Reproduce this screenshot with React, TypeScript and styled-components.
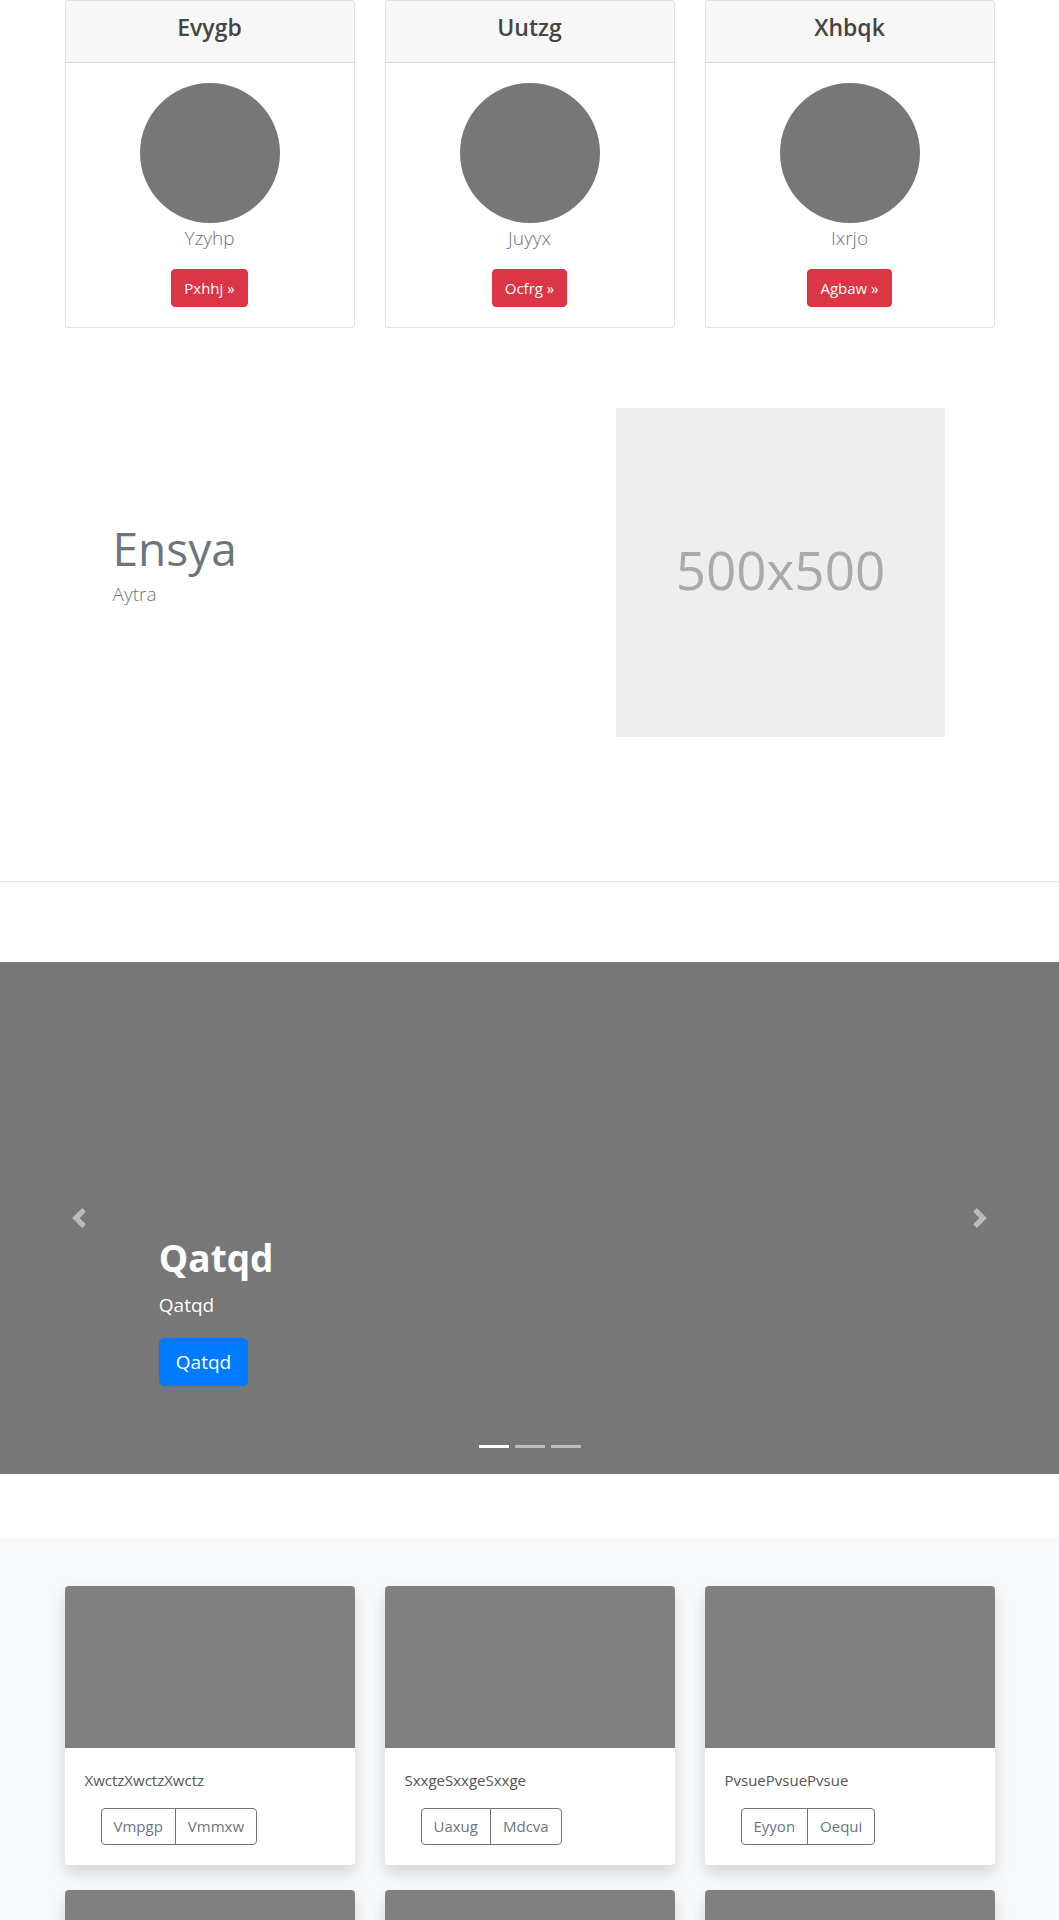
import styled, { createGlobalStyle } from "styled-components"

const GlobalStyle = createGlobalStyle`
  * { box-sizing: border-box; }
  body {
    margin: 0;
    background: #fff;
    color: #212529;
    font-family: "Open Sans", "Noto Sans", sans-serif;
  }
`

const team = [
  { title: "Evygb", name: "Yzyhp", action: "Pxhhj" },
  { title: "Uutzg", name: "Juyyx", action: "Ocfrg" },
  { title: "Xhbqk", name: "Ixrjo", action: "Agbaw" },
]

const albums = [
  { text: "XwctzXwctzXwctz", buttons: ["Vmpgp", "Vmmxw"] },
  { text: "SxxgeSxxgeSxxge", buttons: ["Uaxug", "Mdcva"] },
  { text: "PvsuePvsuePvsue", buttons: ["Eyyon", "Oequi"] },
  { text: "", buttons: [] },
  { text: "", buttons: [] },
  { text: "", buttons: [] },
]

export default function App() {
  return (
    <>
      <GlobalStyle />
      <Container>
        <TeamGrid>
          {team.map(t => (
            <TeamCard key={t.title}>
              <CardHeader>
                <HeaderTitle>{t.title}</HeaderTitle>
              </CardHeader>
              <TeamBody>
                <Avatar />
                <Lead>{t.name}</Lead>
                <DangerButton>{t.action} »</DangerButton>
              </TeamBody>
            </TeamCard>
          ))}
        </TeamGrid>
      </Container>

      <Feature>
        <FeatureText>
          <FeatureTitle>Ensya</FeatureTitle>
          <FeatureLead>Aytra</FeatureLead>
        </FeatureText>
        <Placeholder>500x500</Placeholder>
      </Feature>

      <Divider />

      <Carousel>
        <Control $side="left">
          <ArrowIcon viewBox="0 0 8 8">
            <path d="M5.25 0l-4 4 4 4 1.5-1.5L4.25 4l2.5-2.5L5.25 0z" />
          </ArrowIcon>
        </Control>
        <Caption>
          <CaptionTitle>Qatqd</CaptionTitle>
          <CaptionText>Qatqd</CaptionText>
          <PrimaryButton>Qatqd</PrimaryButton>
        </Caption>
        <Control $side="right">
          <ArrowIcon viewBox="0 0 8 8">
            <path d="M2.75 0l-1.5 1.5L3.75 4l-2.5 2.5L2.75 8l4-4-4-4z" />
          </ArrowIcon>
        </Control>
        <Indicators>
          <Indicator $active />
          <Indicator />
          <Indicator />
        </Indicators>
      </Carousel>

      <Album>
        <Container>
          <AlbumGrid>
            {albums.map((a, i) => (
              <AlbumCard key={i}>
                <Thumb />
                {a.text && (
                  <AlbumBody>
                    <CardText>{a.text}</CardText>
                    <BtnGroup>
                      {a.buttons.map(b => <GroupButton key={b}>{b}</GroupButton>)}
                    </BtnGroup>
                  </AlbumBody>
                )}
              </AlbumCard>
            ))}
          </AlbumGrid>
        </Container>
      </Album>
    </>
  )
}

const Container = styled.div`
  width: 930px;
  margin: 0 auto;
`

const TeamGrid = styled.div`
  display: grid;
  grid-template-columns: repeat(3, 1fr);
  column-gap: 30px;
`

const TeamCard = styled.div`
  border: 1px solid rgba(0, 0, 0, 0.125);
  border-radius: 4px;
  text-align: center;
  background: #fff;
  overflow: hidden;
`

const CardHeader = styled.div`
  background: rgba(0, 0, 0, 0.03);
  border-bottom: 1px solid rgba(0, 0, 0, 0.125);
  padding: 12px 20px;
`

const HeaderTitle = styled.h4`
  margin: 0 0 8px;
  font-size: 23px;
  font-weight: 600;
  line-height: 28.8px;
  color: #454545;
`

const TeamBody = styled.div`
  padding: 20px;
  display: flex;
  flex-direction: column;
  align-items: center;
`

const Avatar = styled.div`
  width: 140px;
  height: 140px;
  border-radius: 50%;
  background: #777;
`

const Lead = styled.p`
  margin: 0 0 16px;
  font-size: 19px;
  font-weight: 300;
  line-height: 30px;
  color: #6c757d;
`

const DangerButton = styled.button`
  font-family: inherit;
  font-size: 15px;
  line-height: 24px;
  padding: 6px 12px;
  color: #fff;
  background: #dc3545;
  border: 1px solid #dc3545;
  border-radius: 4px;
`

const Feature = styled.section`
  width: 930px;
  margin: 0 auto;
  padding: 80px 49.5px 144px 48px;
  display: grid;
  grid-template-columns: 1fr 329px;
  align-items: center;
`

const FeatureText = styled.div`
  padding-top: 2px;
`

const FeatureTitle = styled.h1`
  margin: 0 0 3px;
  font-size: 46px;
  font-weight: 400;
  line-height: 1.2;
  color: #6c757d;
`

const FeatureLead = styled.p`
  margin: 0 0 16px;
  font-size: 19px;
  font-weight: 300;
  line-height: 30px;
  color: #6c757d;
`

const Placeholder = styled.div`
  height: 329px;
  background: #eee;
  display: flex;
  align-items: center;
  justify-content: center;
  padding-bottom: 6px;
  font-size: 53px;
  color: #aaa;
`

const Divider = styled.hr`
  margin: 0;
  border: 0;
  border-top: 1px solid rgba(0, 0, 0, 0.1);
`

const Carousel = styled.section`
  position: relative;
  margin-top: 80px;
  height: 512px;
  background: #777;
  color: #fff;
`

const Control = styled.div<{ $side: "left" | "right" }>`
  position: absolute;
  top: 0;
  bottom: 0;
  ${p => p.$side}: 0;
  width: 15%;
  display: flex;
  align-items: center;
  justify-content: center;
`

const ArrowIcon = styled.svg`
  width: 20px;
  height: 20px;
  fill: #fff;
  opacity: 0.5;
`

const Caption = styled.div`
  position: absolute;
  left: 15%;
  right: 15%;
  bottom: 88px;
`

const CaptionTitle = styled.h1`
  margin: 0 0 8px;
  font-size: 37px;
  font-weight: 700;
  line-height: 48px;
`

const CaptionText = styled.p`
  margin: 0 0 18px;
  font-size: 19px;
  font-weight: 500;
  line-height: 30px;
`

const PrimaryButton = styled.button`
  font-family: inherit;
  font-size: 19px;
  line-height: 30px;
  padding: 8px 16px;
  color: #fff;
  background: #007bff;
  border: 1px solid #007bff;
  border-radius: 5px;
`

const Indicators = styled.div`
  position: absolute;
  left: 0;
  right: 0;
  bottom: 26px;
  display: flex;
  justify-content: center;
  gap: 6px;
`

const Indicator = styled.span<{ $active?: boolean }>`
  width: 30px;
  height: 3px;
  background: #fff;
  opacity: ${p => (p.$active ? 1 : 0.5)};
`

const Album = styled.section`
  margin-top: 64px;
  background: #f8f9fa;
  padding: 48px 0;
`

const AlbumGrid = styled.div`
  display: grid;
  grid-template-columns: repeat(3, 1fr);
  column-gap: 30px;
  row-gap: 25px;
`

const AlbumCard = styled.div`
  background: #fff;
  border-radius: 4px;
  overflow: hidden;
  box-shadow: 0 8px 16px rgba(0, 0, 0, 0.15);
`

const Thumb = styled.div`
  height: 162px;
  background: #808080;
`

const AlbumBody = styled.div`
  padding: 20px;
`

const CardText = styled.p`
  margin: 0 0 16px;
  font-size: 15px;
  line-height: 24px;
  color: #555;
`

const BtnGroup = styled.div`
  display: inline-flex;
  margin-left: 16px;
`

const GroupButton = styled.button`
  font-family: inherit;
  font-size: 15px;
  line-height: 23px;
  padding: 6px 12px;
  color: #6c757d;
  background: transparent;
  border: 1px solid #6c757d;
  border-radius: 0;

  &:first-child {
    border-radius: 4px 0 0 4px;
  }
  & + & {
    margin-left: -1px;
    border-radius: 0 4px 4px 0;
  }
`
